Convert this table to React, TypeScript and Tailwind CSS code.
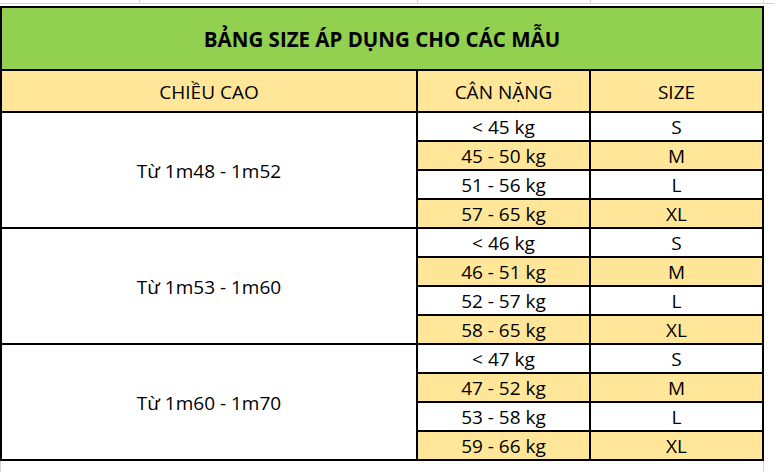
import React from "react";

type Row = { weight: string; size: string };

const groups: { height: string; rows: Row[] }[] = [
  {
    height: "Từ 1m48 - 1m52",
    rows: [
      { weight: "< 45 kg", size: "S" },
      { weight: "45 - 50 kg", size: "M" },
      { weight: "51 - 56 kg", size: "L" },
      { weight: "57 - 65 kg", size: "XL" },
    ],
  },
  {
    height: "Từ 1m53 - 1m60",
    rows: [
      { weight: "< 46 kg", size: "S" },
      { weight: "46 - 51 kg", size: "M" },
      { weight: "52 - 57 kg", size: "L" },
      { weight: "58 - 65 kg", size: "XL" },
    ],
  },
  {
    height: "Từ 1m60 - 1m70",
    rows: [
      { weight: "< 47 kg", size: "S" },
      { weight: "47 - 52 kg", size: "M" },
      { weight: "53 - 58 kg", size: "L" },
      { weight: "59 - 66 kg", size: "XL" },
    ],
  },
];

const cell = "flex items-center justify-center border-r-2 border-b-2 border-black";

export default function App() {
  return (
    <div className="w-[774px] h-[472px] bg-white overflow-hidden text-black text-[19px] leading-none font-['Open_Sans','Liberation_Sans',sans-serif]">
      {/* sheet gridlines above the table */}
      <div className="h-[6px]">
        <div className="flex h-[4px] border-b border-[#d4d4d4]">
          <div className="w-[140px] border-r border-[#d4d4d4]" />
          <div className="w-[278px] border-r border-[#d4d4d4]" />
          <div className="w-[173px] border-r border-[#d4d4d4]" />
          <div className="w-[173px] border-r border-[#d4d4d4]" />
        </div>
      </div>

      <div className="grid grid-cols-[416px_173px_173px] w-[764px] border-l-2 border-t-2 border-black">
        <div className={`${cell} col-span-3 h-[63px] bg-[#92d050] text-[20.5px] font-bold pt-[2px]`}>
          BẢNG SIZE ÁP DỤNG CHO CÁC MẪU
        </div>

        <div className={`${cell} h-[42px] bg-[#ffe699] pt-[3px]`}>CHIỀU CAO</div>
        <div className={`${cell} h-[42px] bg-[#ffe699] pt-[3px]`}>CÂN NẶNG</div>
        <div className={`${cell} h-[42px] bg-[#ffe699] pt-[3px]`}>SIZE</div>

        {groups.map((g) => (
          <React.Fragment key={g.height}>
            <div className={`${cell} row-span-4 bg-white pt-[2px]`}>{g.height}</div>
            {g.rows.map((r, i) => (
              <React.Fragment key={r.weight}>
                <div className={`${cell} h-[29px] pt-[2px] ${i % 2 === 1 ? "bg-[#ffe699]" : "bg-white"}`}>{r.weight}</div>
                <div className={`${cell} h-[29px] pt-[2px] ${i % 2 === 1 ? "bg-[#ffe699]" : "bg-white"}`}>{r.size}</div>
              </React.Fragment>
            ))}
          </React.Fragment>
        ))}
      </div>

      {/* sheet gridlines below the table */}
      <div className="flex h-[12px]">
        <div className="w-[1px] bg-[#d4d4d4]" />
        <div className="w-[762px]" />
        <div className="w-[1px] bg-[#d4d4d4]" />
      </div>
    </div>
  );
}
